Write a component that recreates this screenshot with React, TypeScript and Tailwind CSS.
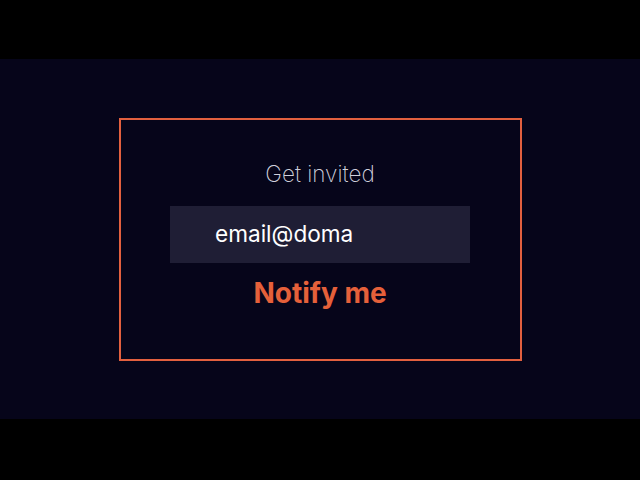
export default function App() {
  return (
    <div className="flex h-[480px] w-[640px] flex-col bg-black font-['Inter',sans-serif]">
      <div className="h-[59px] bg-black" />
      <main className="flex flex-1 items-center justify-center bg-[#06051a]">
        <section className="flex h-[243px] w-[403px] flex-col items-center border-2 border-[#e2603f]">
          <h2 className="mt-[38px] h-[32px] text-[22.5px] leading-[32px] font-extralight text-[#d0d0dc]">
            Get invited
          </h2>
          <div className="mt-[16px] flex h-[57px] w-[300px] items-center bg-[#1f1e35] pl-[45px]">
            <span className="text-[22.6px] font-normal text-white">email@doma</span>
          </div>
          <button className="mt-[12px] h-[36px] text-[28px] leading-[36px] font-bold text-[#e5603a]">
            Notify me
          </button>
        </section>
      </main>
      <div className="h-[61px] bg-black" />
    </div>
  );
}
